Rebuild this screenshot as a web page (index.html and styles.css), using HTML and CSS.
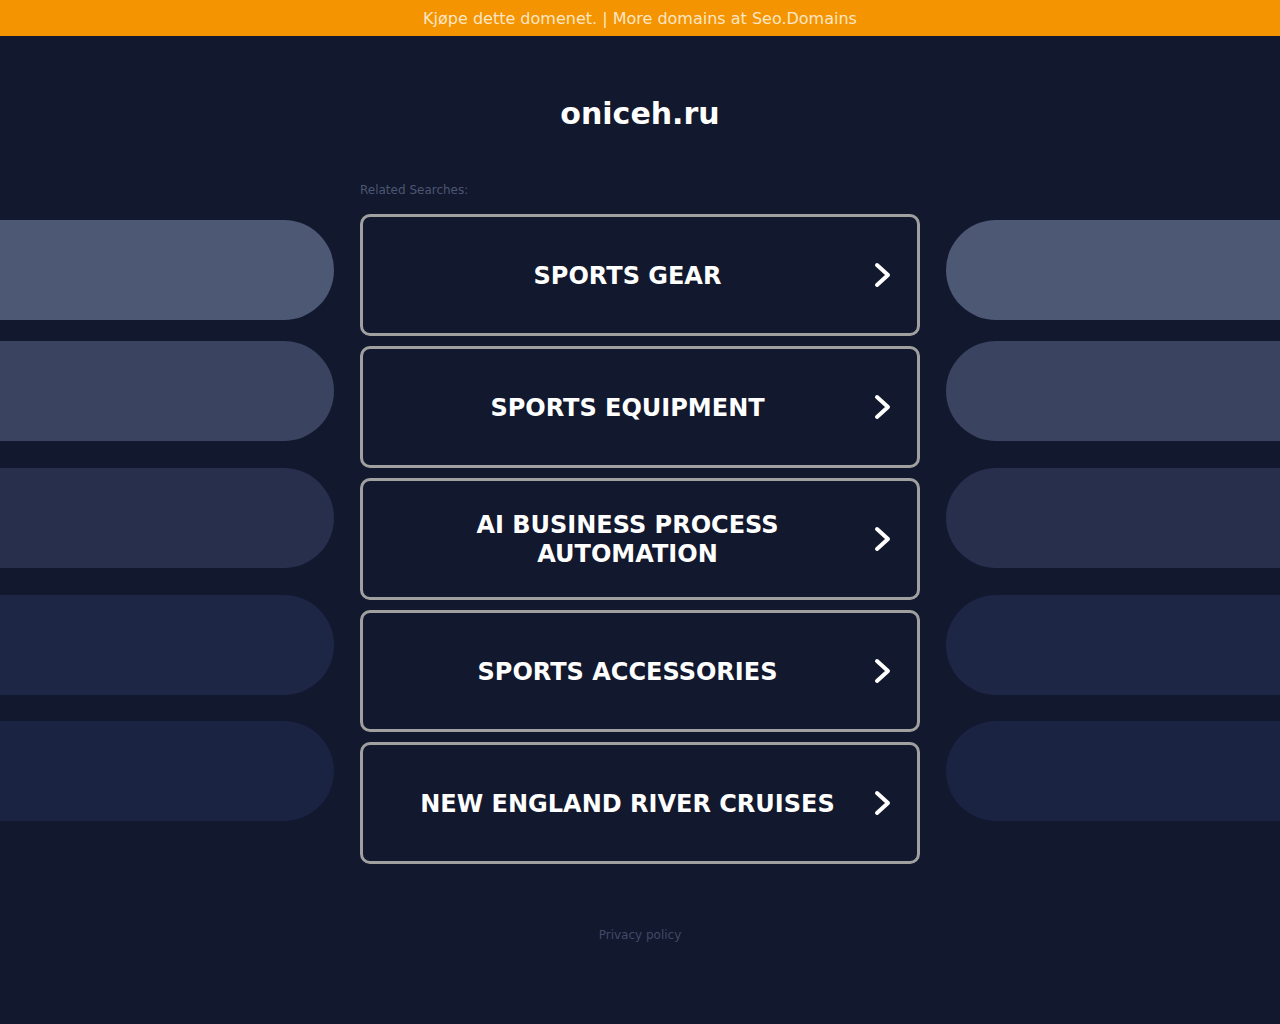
FILE: index.html
```html
<!DOCTYPE html>
<html lang="no">
<head>
  <meta charset="UTF-8">
  <title>oniceh.ru</title>
  <link rel="stylesheet" href="styles.css">
</head>
<body>
<!-- 상단 배너 -->
<div class="topbar">Kjøpe dette domenet. | More domains at Seo.Domains</div>

<div class="page">
  <!-- 왼쪽 장식 -->
  <div class="side side-left">
    <div class="pill p1"></div>
    <div class="pill p2"></div>
    <div class="pill p3"></div>
    <div class="pill p4"></div>
    <div class="pill p5"></div>
  </div>

  <div class="main">
    <h1>oniceh.ru</h1>
    <div class="label">Related Searches:</div>

    <div class="links">
      <a class="link" href="#"><span class="text">Sports Gear</span><svg class="arrow" viewBox="0 0 20 26"><path d="M4 3 L15 13 L4 23"/></svg></a>
      <a class="link" href="#"><span class="text">Sports Equipment</span><svg class="arrow" viewBox="0 0 20 26"><path d="M4 3 L15 13 L4 23"/></svg></a>
      <a class="link" href="#"><span class="text">AI Business Process Automation</span><svg class="arrow" viewBox="0 0 20 26"><path d="M4 3 L15 13 L4 23"/></svg></a>
      <a class="link" href="#"><span class="text">Sports Accessories</span><svg class="arrow" viewBox="0 0 20 26"><path d="M4 3 L15 13 L4 23"/></svg></a>
      <a class="link" href="#"><span class="text">New England River Cruises</span><svg class="arrow" viewBox="0 0 20 26"><path d="M4 3 L15 13 L4 23"/></svg></a>
    </div>

    <div class="privacy">Privacy policy</div>
  </div>

  <!-- 오른쪽 장식 -->
  <div class="side side-right">
    <div class="pill p1"></div>
    <div class="pill p2"></div>
    <div class="pill p3"></div>
    <div class="pill p4"></div>
    <div class="pill p5"></div>
  </div>
</div>
</body>
</html>
```

FILE: styles.css
```css
body {
  margin: 0;
  padding: 0;
  font-family: "DejaVu Sans", sans-serif;
  background-color: #12182d;
  overflow: hidden;
}
.topbar {
  height: 36px;
  line-height: 38px;
  background-color: #f39400;
  color: #fde6c6;
  font-size: 16px;
  text-align: center;
}
.page {
  display: grid;
  grid-template-columns: 1fr 560px 1fr;
  min-height: 988px;
}
.side {
  display: flex;
  flex-direction: column;
  padding-top: 184px;
  overflow: hidden;
}
.side-left {
  padding-right: 26px;
}
.side-right {
  padding-left: 26px;
}
.pill {
  height: 100px;
  flex-shrink: 0;
  margin-bottom: 27px;
}
.side-left .pill {
  border-radius: 0 50px 50px 0;
}
.side-right .pill {
  border-radius: 50px 0 0 50px;
}
.pill.p1 { margin-bottom: 21px; background-color: #4d5875; }
.pill.p2 { background-color: #3a435f; }
.pill.p3 { background-color: #272f4d; }
.pill.p4 { margin-bottom: 26px; background-color: #1e2646; }
.pill.p5 { background-color: #1b2342; }
.main {
  display: flex;
  flex-direction: column;
}
h1 {
  margin: 58px 0 0;
  height: 40px;
  line-height: 40px;
  font-size: 30px;
  font-weight: bold;
  color: #fff;
  text-align: center;
}
.label {
  margin-top: 49px;
  font-size: 12px;
  color: #4b5672;
}
.links {
  margin-top: 17px;
  display: flex;
  flex-direction: column;
  gap: 10px;
}
.link {
  height: 116px;
  display: flex;
  align-items: center;
  border: 3px solid #a0a0a0;
  border-radius: 10px;
  text-decoration: none;
  color: #fff;
  padding: 0 24px 0 21px;
}
.link .text {
  flex: 1;
  padding: 2px 26px 0 24px;
  text-align: center;
  text-transform: uppercase;
  font-size: 24px;
  font-weight: bold;
  letter-spacing: 0;
  line-height: 29px;
}
.arrow {
  width: 20px;
  height: 26px;
  fill: none;
  stroke: #fff;
  stroke-width: 4;
  stroke-linecap: round;
  stroke-linejoin: round;
}
.privacy {
  margin-top: 64px;
  font-size: 12px;
  color: #404a66;
  text-align: center;
}
```
